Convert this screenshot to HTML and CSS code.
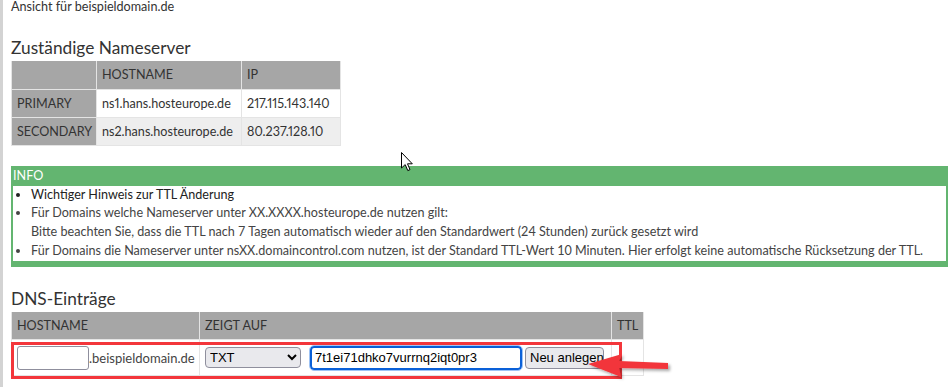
FILE: index.html
```html
<!DOCTYPE html>
<html lang="de">
<head>
    <meta charset="UTF-8">
    <meta name="viewport" content="width=device-width, initial-scale=1.0">
    <title>DNS Verwaltung</title>
    <link rel="stylesheet" href="styles.css">
</head>
<body>
    <div class="page">
        <p class="view-title">Ansicht für beispieldomain.de</p>

        <h2 class="ns-title">Zuständige Nameserver</h2>
        <table class="grid ns-table">
            <tr>
                <th class="c-label"></th>
                <th class="c-host">Hostname</th>
                <th class="c-ip">IP</th>
            </tr>
            <tr>
                <th class="row-label">Primary</th>
                <td>ns1.hans.hosteurope.de</td>
                <td>217.115.143.140</td>
            </tr>
            <tr class="alt">
                <th class="row-label">Secondary</th>
                <td>ns2.hans.hosteurope.de</td>
                <td>80.237.128.10</td>
            </tr>
        </table>

        <div class="info">
            <div class="info-head">Info</div>
            <ul>
                <li class="strong">Wichtiger Hinweis zur TTL Änderung</li>
                <li>Für Domains welche Nameserver unter XX.XXXX.hosteurope.de nutzen gilt:<br>
                    Bitte beachten Sie, dass die TTL nach 7 Tagen automatisch wieder auf den Standardwert (24 Stunden) zurück gesetzt wird</li>
                <li>Für Domains die Nameserver unter nsXX.domaincontrol.com nutzen, ist der Standard TTL-Wert 10 Minuten. Hier erfolgt keine automatische Rücksetzung der TTL.</li>
            </ul>
        </div>

        <h2 class="dns-title">DNS-Einträge</h2>
        <table class="grid dns-table">
            <tr>
                <th class="d-host">Hostname</th>
                <th class="d-target">Zeigt auf</th>
                <th class="d-ttl">TTL</th>
            </tr>
            <tr class="new-row">
                <td>
                    <div class="host-fields">
                        <input type="text" class="host-input"><span class="domain">.beispieldomain.de</span>
                    </div>
                </td>
                <td>
                    <div class="target-fields">
                        <select class="type-select">
                            <option>TXT</option>
                            <option>A</option>
                            <option>CNAME</option>
                            <option>MX</option>
                        </select>
                        <input type="text" class="value-input" value="7t1ei71dhko7vurrnq2iqt0pr3">
                        <button class="btn">Neu anlegen</button>
                    </div>
                </td>
                <td></td>
            </tr>
        </table>

        <!-- screenshot annotations -->
        <div class="mark-box"></div>
        <svg class="mark-arrow" width="96" height="36" viewBox="0 0 96 36">
            <defs>
                <filter id="shadow" x="-20%" y="-40%" width="140%" height="180%">
                    <feDropShadow dx="2" dy="2" stdDeviation="1.5" flood-color="#000" flood-opacity="0.35"/>
                </filter>
            </defs>
            <polygon points="4,14 38,4 35,11 84,13 84,19 35,18 37,27" fill="#f2363b" filter="url(#shadow)"/>
        </svg>
        <svg class="cursor" width="13" height="20" viewBox="0 0 13 20">
            <path d="M0.5,0.5 L0.5,16 L4.2,12.6 L6.8,18.6 L9,17.6 L6.5,11.8 L11.3,11.8 Z" fill="#fff" stroke="#000" stroke-width="1" stroke-linejoin="miter"/>
        </svg>
    </div>
</body>
</html>
```

FILE: styles.css
```css
* {
    box-sizing: border-box;
}
body {
    margin: 0;
    font-family: Lato, "Open Sans", sans-serif;
    font-size: 12.6px;
    color: #333;
    background: #fff;
}
.page {
    position: relative;
    border-left: 3px solid #d3d3d3;
    padding: 1px 0 0 8px;
    height: 387px;
    overflow: hidden;
}
.view-title {
    margin: -2px 0 0;
    line-height: 16px;
}
h2 {
    font-weight: normal;
    font-size: 17.3px;
    line-height: 22px;
    margin: 0;
    color: #333;
}
.ns-title {
    margin: 22px 0 2px;
}
.dns-title {
    margin: 21px 0 2px;
}
.grid {
    border-collapse: collapse;
    table-layout: fixed;
    font-variant-numeric: proportional-nums;
}
.grid th,
.grid td {
    border: 1px solid #e4e4e4;
    padding: 0 5px;
    text-align: left;
    font-weight: normal;
    white-space: nowrap;
}
.grid th {
    background: #a6a6a6;
    text-transform: uppercase;
    color: #333;
}
.ns-table {
    width: 329px;
}
.ns-table th,
.ns-table td {
    height: 28px;
}
.ns-table .c-label { width: 85px; }
.ns-table .c-host { width: 145px; }
.ns-table .c-ip { width: 99px; }
.grid tr:first-child th {
    border-top: 0;
}
.ns-table tr.alt td {
    background: #eee;
}
.info {
    width: 937px;
    margin-top: 20px;
    background: #63b570;
    padding: 0 2px 6px;
}
.info-head {
    color: #fff;
    text-transform: uppercase;
    line-height: 20px;
}
.info ul {
    margin: 0;
    padding: 0 0 0 18px;
    background: #fff;
    line-height: 18.75px;
    color: #444;
}
.info li.strong {
    color: #222;
}
.dns-table {
    width: 632px;
}
.dns-table th {
    height: 28px;
}
.dns-table .d-host { width: 188px; }
.dns-table .d-target { width: 412px; }
.dns-table .d-ttl { width: 32px; }
.dns-table td {
    height: 36px;
    padding: 0 5px;
}
.host-fields,
.target-fields {
    display: flex;
    align-items: center;
}
.host-input,
.value-input {
    font-family: "Liberation Sans", Arial, sans-serif;
    font-size: 13px;
    height: 24px;
    border: 1px solid #8f8f9d;
    border-radius: 3px;
    padding: 0 3px;
    color: #000;
}
.host-input {
    width: 72px;
}
.domain {
    color: #444;
    font-size: 13px;
}
.type-select {
    font-family: "Liberation Sans", Arial, sans-serif;
    font-size: 13px;
    width: 96px;
    height: 21px;
    margin-right: 9px;
    border: 1px solid #8f8f9d;
    border-radius: 4px;
    background: #e9e9ed;
    color: #000;
}
.value-input {
    width: 212px;
    margin-right: 3px;
    border: 2px solid #0a60d8;
    border-radius: 4px;
    outline: 1px solid #9ec3f5;
}
.btn {
    font-family: "Liberation Sans", Arial, sans-serif;
    font-size: 13px;
    height: 22px;
    width: 79px;
    padding: 0 4px;
    border: 1px solid #8f8f9d;
    border-radius: 4px;
    background: #e9e9ed;
    color: #000;
}
.mark-box {
    position: absolute;
    left: 8px;
    top: 342px;
    width: 611px;
    height: 37px;
    border: 3px solid #f3363b;
}
.mark-arrow {
    position: absolute;
    left: 581px;
    top: 350px;
}
.cursor {
    position: absolute;
    left: 398px;
    top: 152px;
}
```
